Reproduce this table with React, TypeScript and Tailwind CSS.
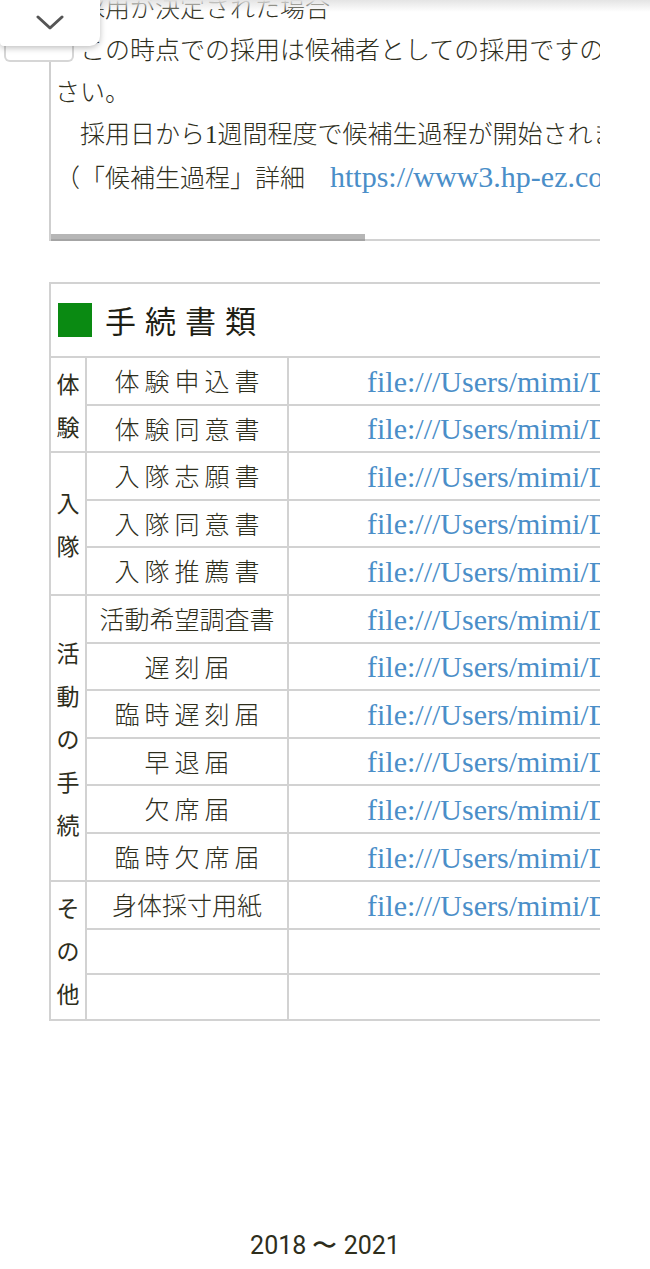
import React from "react";

const INK = "text-[#2e2e1c]";
const LINK = "text-[#4a8ec8]";
const JP = "font-['Noto_Sans_CJK_JP',sans-serif]";
const SERIF = "font-['Liberation_Serif','Noto_Sans_CJK_JP',serif]";

type Row = { name: string; wide?: boolean; h: string; link?: boolean };
type Group = { cat: string[]; rows: Row[] };

const GROUPS: Group[] = [
  {
    cat: ["体", "験"],
    rows: [
      { name: "体験申込書", wide: true, h: "h-[48px]", link: true },
      { name: "体験同意書", wide: true, h: "h-[47px]", link: true },
    ],
  },
  {
    cat: ["入", "隊"],
    rows: [
      { name: "入隊志願書", wide: true, h: "h-[48px]", link: true },
      { name: "入隊同意書", wide: true, h: "h-[47px]", link: true },
      { name: "入隊推薦書", wide: true, h: "h-[48px]", link: true },
    ],
  },
  {
    cat: ["活", "動", "の", "手", "続"],
    rows: [
      { name: "活動希望調査書", h: "h-[48px]", link: true },
      { name: "遅刻届", wide: true, h: "h-[47px]", link: true },
      { name: "臨時遅刻届", wide: true, h: "h-[48px]", link: true },
      { name: "早退届", wide: true, h: "h-[47px]", link: true },
      { name: "欠席届", wide: true, h: "h-[48px]", link: true },
      { name: "臨時欠席届", wide: true, h: "h-[48px]", link: true },
    ],
  },
  {
    cat: ["そ", "の", "他"],
    rows: [
      { name: "身体採寸用紙", h: "h-[48px]", link: true },
      { name: "", h: "h-[45px]" },
      { name: "", h: "h-[46px]" },
    ],
  },
];

function Chevron() {
  return (
    <svg width="28" height="16" viewBox="0 0 28 16" fill="none">
      <path d="M2 2 L14 13 L26 2" stroke="#555" strokeWidth="3" strokeLinecap="round" strokeLinejoin="round" />
    </svg>
  );
}

export default function App() {
  return (
    <div className={`relative w-[650px] h-[1269px] overflow-hidden bg-white ${INK} [text-spacing-trim:space-all]`}>
      {/* header shadow + dropdown tab */}
      <div className="absolute top-0 left-0 right-0 h-[12px] bg-gradient-to-b from-[#e4e4e4] to-transparent z-20" />
      <div className="absolute top-[44px] left-[4px] w-[70px] h-[18px] rounded-b-[6px] border-2 border-t-0 border-[#d6d6d6] bg-white z-20" />
      <div className="absolute top-0 left-0 w-[100px] h-[46px] rounded-br-[10px] rounded-bl-[4px] bg-white shadow-[0_2px_6px_rgba(0,0,0,0.25)] z-30 flex items-center justify-center">
        <Chevron />
      </div>

      <div className="ml-[49px] w-[551px] overflow-hidden">
        {/* text panel */}
        <div className="-mt-[12px] border-l-2 border-[#cfcfcf] relative">
          <div className={`${SERIF} pl-[4px] pb-[39px] text-[25px] leading-[42px] whitespace-nowrap font-light`}>
            <div>　採用が決定された場合</div>
            <div>　この時点での採用は候補者としての採用ですので、ご了承ください</div>
            <div>さい。</div>
            <div>　採用日から1週間程度で候補生過程が開始されます。</div>
            <div>
              （「候補生過程」詳細　<span className={`${LINK} text-[30px]`}>https://www3.hp-ez.com/hp/example</span>
            </div>
          </div>
          <div className="h-[2px] bg-[#d2d2d2]" />
          <div className="absolute left-0 bottom-0 w-[314px] h-[7px] bg-[#b6b6b6] border-b-2 border-[#a4a4a4]" />
        </div>

        {/* document table */}
        <div className="mt-[41px] w-[900px] border-l-2 border-t-2 border-[#d2d2d2]">
          <div className="h-[74px] border-b-2 border-[#d2d2d2] flex items-center pl-[7px] gap-[13px]">
            <div className="w-[34px] h-[34px] bg-[#0a8a12]" />
            <div className={`${JP} text-[31px] tracking-[9px] text-[#1e1e14]`}>手続書類</div>
          </div>
          {GROUPS.map((g, gi) => (
            <div key={gi} className="flex">
              <div className={`${JP} w-[36px] shrink-0 border-r-2 border-b-2 border-[#d2d2d2] flex flex-col items-center justify-center text-[23px] leading-[43px]`}>
                {g.cat.map((c, ci) => (
                  <span key={ci}>{c}</span>
                ))}
              </div>
              <div className="flex-1 flex flex-col">
                {g.rows.map((r, ri) => (
                  <div key={ri} className={`${r.h} flex border-b-2 border-[#d2d2d2]`}>
                    <div
                      className={`${JP} w-[202px] shrink-0 border-r-2 border-[#d2d2d2] flex items-center justify-center text-[25px] font-light ${
                        r.wide ? "tracking-[5px] pl-[5px]" : ""
                      }`}
                    >
                      {r.name}
                    </div>
                    <div className={`flex-1 flex items-center pl-[78px] ${SERIF} text-[30px] ${LINK}`}>
                      {r.link ? "file:///Users/mimi/Desktop/document.pdf" : ""}
                    </div>
                  </div>
                ))}
              </div>
            </div>
          ))}
        </div>
      </div>

      <div className="absolute left-0 right-0 top-[1227px] text-center font-['Roboto',sans-serif] text-[25px] text-[#2e2e1c]">
        2018 〜 2021
      </div>
    </div>
  );
}
